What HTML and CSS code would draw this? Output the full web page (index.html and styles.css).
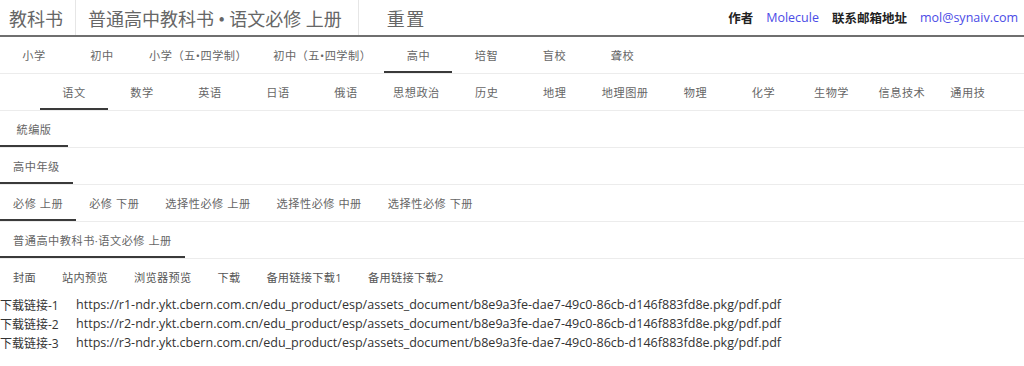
FILE: index.html
```html
<!DOCTYPE html>
<html lang="zh-CN">
<head>
<meta charset="utf-8">
<title>教科书</title>
<link rel="stylesheet" href="styles.css">
</head>
<body>
<header class="topbar">
  <div class="brand">教科书</div>
  <div class="title">普通高中教科书 • 语文必修 上册</div>
  <div class="reset">重置</div>
  <div class="spacer"></div>
  <div class="meta">
    <span class="label">作者</span>
    <a class="link">Molecule</a>
    <span class="label">联系邮箱地址</span>
    <a class="link">mol@synaiv.com</a>
  </div>
</header>

<nav class="tabs">
  <div class="tab">小学</div>
  <div class="tab">初中</div>
  <div class="tab">小学（五•四学制）</div>
  <div class="tab">初中（五•四学制）</div>
  <div class="tab active">高中</div>
  <div class="tab">培智</div>
  <div class="tab">盲校</div>
  <div class="tab">聋校</div>
</nav>

<nav class="tabs scroll">
  <div class="scroll-track">
    <div class="tab active">语文</div>
    <div class="tab">数学</div>
    <div class="tab">英语</div>
    <div class="tab">日语</div>
    <div class="tab">俄语</div>
    <div class="tab">思想政治</div>
    <div class="tab">历史</div>
    <div class="tab">地理</div>
    <div class="tab">地理图册</div>
    <div class="tab">物理</div>
    <div class="tab">化学</div>
    <div class="tab">生物学</div>
    <div class="tab">信息技术</div>
    <div class="tab partial">通用技</div>
  </div>
</nav>

<nav class="tabs">
  <div class="tab active">統编版</div>
</nav>

<nav class="tabs">
  <div class="tab active">高中年级</div>
</nav>

<nav class="tabs">
  <div class="tab active">必修 上册</div>
  <div class="tab">必修 下册</div>
  <div class="tab">选择性必修 上册</div>
  <div class="tab">选择性必修 中册</div>
  <div class="tab">选择性必修 下册</div>
</nav>

<nav class="tabs">
  <div class="tab active">普通高中教科书·语文必修 上册</div>
</nav>

<div class="actions">
  <span class="action">封面</span>
  <span class="action">站内预览</span>
  <span class="action">浏览器预览</span>
  <span class="action">下载</span>
  <span class="action">备用链接下载1</span>
  <span class="action">备用链接下载2</span>
</div>

<ul class="downloads">
  <li><span class="dl-label">下载链接-1</span><span class="dl-url">https://r1-ndr.ykt.cbern.com.cn/edu_product/esp/assets_document/b8e9a3fe-dae7-49c0-86cb-d146f883fd8e.pkg/pdf.pdf</span></li>
  <li><span class="dl-label">下载链接-2</span><span class="dl-url">https://r2-ndr.ykt.cbern.com.cn/edu_product/esp/assets_document/b8e9a3fe-dae7-49c0-86cb-d146f883fd8e.pkg/pdf.pdf</span></li>
  <li><span class="dl-label">下载链接-3</span><span class="dl-url">https://r3-ndr.ykt.cbern.com.cn/edu_product/esp/assets_document/b8e9a3fe-dae7-49c0-86cb-d146f883fd8e.pkg/pdf.pdf</span></li>
</ul>
</body>
</html>
```

FILE: styles.css
```css
* { box-sizing: border-box; }

html, body {
  margin: 0;
  padding: 0;
  background: #fff;
}

body {
  font-family: "Open Sans", "Noto Sans CJK SC", sans-serif;
  color: #333;
  width: 1024px;
  overflow: hidden;
}

.topbar {
  display: flex;
  align-items: stretch;
  height: 37px;
  border-bottom: 2px solid #6f6f6f;
}

.brand,
.title,
.reset {
  display: flex;
  align-items: center;
  font-family: "Liberation Serif", "Noto Sans CJK SC", serif;
  font-size: 18px;
  color: #666;
}

.brand {
  padding: 0 12px 0 9px;
  border-right: 1px solid #e6e6e6;
}

.title {
  padding: 0 16px 0 12px;
  border-right: 1px solid #e6e6e6;
}

.reset {
  padding: 0 0 0 28px;
  letter-spacing: 1.5px;
}

.spacer { flex: 1; }

.meta {
  display: flex;
  align-items: center;
  gap: 13px;
  padding-right: 6px;
  font-size: 12.5px;
}

.meta .label {
  font-weight: 700;
  color: #222;
}

.meta .link {
  color: #4b4be6;
  text-decoration: none;
}

.tabs {
  display: flex;
  height: 37px;
  border-bottom: 1px solid #ececec;
}

.tabs.scroll {
  padding: 0 34px 0 40px;
}

.scroll-track {
  display: flex;
  overflow: hidden;
  flex: 1;
}

.tab {
  flex-shrink: 0;
  min-width: 68px;
  padding: 0 13px;
  display: flex;
  align-items: center;
  justify-content: center;
  font-size: 11.2px;
  letter-spacing: 0.5px;
  color: #666;
  white-space: nowrap;
}

.tab.partial {
  justify-content: flex-start;
  padding-left: 12px;
}

.tab.active {
  box-shadow: inset 0 -2px 0 #3a3a3a;
}

.actions {
  display: flex;
  height: 36px;
  align-items: center;
}

.action {
  padding: 0 13px;
  font-size: 11.2px;
  letter-spacing: 0.3px;
  color: #555;
  white-space: nowrap;
}

.downloads {
  list-style: none;
  margin: 0;
  padding: 0;
}

.downloads li {
  display: flex;
  gap: 16px;
  height: 19px;
  align-items: center;
  font-size: 12.55px;
  color: #333;
  white-space: nowrap;
}

.dl-label {
  width: 60px;
  font-size: 12px;
}

.dl-url {
  font-family: "Open Sans", sans-serif;
}
```
